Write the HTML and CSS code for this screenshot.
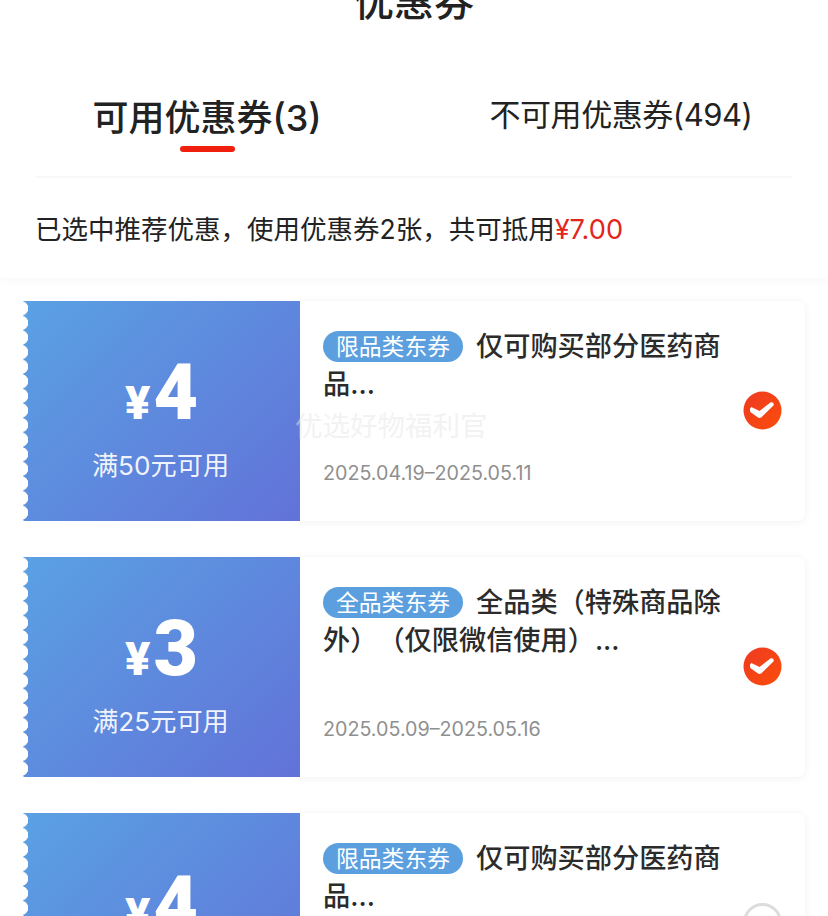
FILE: index.html
```html
<!DOCTYPE html>
<html lang="zh">
<head>
<meta charset="utf-8">
<title>优惠券</title>
<link rel="stylesheet" href="styles.css">
</head>
<body>
<div class="page">
  <header class="header">
    <h1 class="title">优惠券</h1>
    <nav class="tabs">
      <div class="tab tab-active">可用优惠券(3)<span class="tab-bar"></span></div>
      <div class="tab">不可用优惠券(494)</div>
    </nav>
    <div class="divider"></div>
    <div class="summary">已选中推荐优惠，使用优惠券2张，共可抵用<span class="summary-amount">¥7.00</span></div>
  </header>
  <main class="list">
    <article class="coupon">
      <div class="coupon-value">
        <div class="price"><span class="currency">¥</span><span class="amount">4</span></div>
        <div class="condition">满50元可用</div>
      </div>
      <div class="coupon-body">
        <div class="coupon-info">
          <div class="coupon-title"><span class="tag">限品类东券</span>仅可购买部分医药商品...</div>
          <div class="coupon-date">2025.04.19–2025.05.11</div>
        </div>
        <svg class="check" viewBox="0 0 40 40"><defs><linearGradient id="g1" x1="0" y1="0" x2="1" y2="1"><stop offset="0" stop-color="#ee3a22"/><stop offset="1" stop-color="#fb4d0c"/></linearGradient></defs><circle cx="20" cy="20" r="19.5" fill="url(#g1)"/><path d="M8.5 16.5L17 20.5L28.5 11.5Q32 11 31.5 14.5L19 27Q17 28.5 15 27L7.5 21.5Q6.5 17.5 8.5 16.5Z" fill="#fff"/></svg>
      </div>
    </article>
    <article class="coupon">
      <div class="coupon-value">
        <div class="price"><span class="currency">¥</span><span class="amount">3</span></div>
        <div class="condition">满25元可用</div>
      </div>
      <div class="coupon-body">
        <div class="coupon-info">
          <div class="coupon-title"><span class="tag">全品类东券</span>全品类（特殊商品除外）（仅限微信使用）...</div>
          <div class="coupon-date">2025.05.09–2025.05.16</div>
        </div>
        <svg class="check" viewBox="0 0 40 40"><circle cx="20" cy="20" r="19.5" fill="url(#g1)"/><path d="M8.5 16.5L17 20.5L28.5 11.5Q32 11 31.5 14.5L19 27Q17 28.5 15 27L7.5 21.5Q6.5 17.5 8.5 16.5Z" fill="#fff"/></svg>
      </div>
    </article>
    <article class="coupon">
      <div class="coupon-value">
        <div class="price"><span class="currency">¥</span><span class="amount">4</span></div>
        <div class="condition">满50元可用</div>
      </div>
      <div class="coupon-body">
        <div class="coupon-info">
          <div class="coupon-title"><span class="tag">限品类东券</span>仅可购买部分医药商品...</div>
          <div class="coupon-date">2025.04.19–2025.05.11</div>
        </div>
        <span class="check check-off"></span>
      </div>
    </article>
  </main>
  <div class="watermark">优选好物福利官</div>
</div>
</body>
</html>
```

FILE: styles.css
```css
* { box-sizing: border-box; }
html, body { margin: 0; padding: 0; background: #fff; }
body {
  font-family: Inter, "Noto Sans CJK SC", sans-serif;
  color: #222;
}
.page { position: relative; height: 916px; overflow: hidden; background: #fff; }

.header {
  height: 278px;
  background: #fff;
  box-shadow: 0 2px 10px rgba(0, 0, 0, 0.035);
  display: flex;
  flex-direction: column;
}
.title {
  margin: -18px 0 0;
  height: 40px;
  line-height: 40px;
  font-size: 40px;
  font-weight: 500;
  text-align: center;
  color: #222;
}
.tabs {
  height: 154px;
  padding-top: 67px;
  display: flex;
}
.tab {
  position: relative;
  flex: 0 0 414px;
  height: 52px;
  line-height: 52px;
  font-size: 31px;
  letter-spacing: -0.45px;
  text-align: center;
  white-space: nowrap;
  color: #222;
}
.tab-active {
  padding-top: 3px;
  font-size: 36px;
  letter-spacing: 0;
  font-weight: 500;
}
.tab-bar {
  position: absolute;
  left: 180px;
  top: 57px;
  width: 55px;
  height: 6px;
  border-radius: 3px;
  background: #f0200f;
}
.divider {
  flex: none;
  margin: 0 36px;
  height: 2px;
  background: #f8f8f8;
}
.summary {
  margin: 34px 0 0 35px;
  height: 34px;
  line-height: 34px;
  font-size: 26.5px;
  white-space: nowrap;
  color: #222;
}
.summary-amount { color: #e3261d; font-size: 27.2px; }

.list {
  padding: 23px 23px 0;
  display: flex;
  flex-direction: column;
  gap: 36px;
}
.coupon {
  flex: none;
  display: flex;
  height: 220px;
  width: 782px;
}
.coupon-value {
  position: relative;
  flex: none;
  width: 277px;
  background: linear-gradient(135deg, #5aa1e3 0%, #6272d8 100%);
  display: flex;
  flex-direction: column;
  align-items: center;
  color: #fff;
}
.coupon-value::before {
  content: "";
  position: absolute;
  left: 0;
  top: 0;
  bottom: 0;
  width: 6px;
  background: radial-gradient(circle at -2px 50%, #fff 7px, transparent 7.5px) 0 0 / 6px 14.6px repeat-y;
}
.price {
  margin-top: 54px;
  height: 76px;
  display: flex;
  align-items: baseline;
  justify-content: center;
  line-height: 76px;
}
.currency {
  font-family: Roboto, sans-serif;
  font-size: 47px;
  font-weight: 900;
  margin-right: 3px;
}
.amount {
  font-family: Roboto, sans-serif;
  font-size: 77px;
  font-weight: 900;
}
.condition {
  margin-top: 18px;
  padding-right: 2px;
  line-height: 34px;
  font-size: 26.2px;
  color: rgba(255, 255, 255, 0.92);
  white-space: nowrap;
}
.coupon-body {
  flex: 1;
  min-width: 0;
  background: #fff;
  border-radius: 0 8px 8px 0;
  box-shadow: 0 1px 8px rgba(0, 0, 0, 0.06);
  padding: 0 23px;
  display: flex;
  align-items: center;
  gap: 22px;
}
.coupon-info {
  flex: 1;
  min-width: 0;
  height: 220px;
  padding-top: 27px;
  display: flex;
  flex-direction: column;
}
.coupon-title {
  height: 76px;
  line-height: 38px;
  font-size: 27.2px;
  font-weight: 500;
  color: #2b2b2b;
  width: 400px;
  text-spacing-trim: space-all;
}
.tag {
  display: inline-block;
  vertical-align: top;
  margin: 3px 13px 0 0;
  width: 140px;
  height: 31px;
  line-height: 32px;
  border-radius: 16px;
  background: #5b9fdf;
  color: #fff;
  font-size: 22.8px;
  font-weight: 400;
  text-align: center;
}
.coupon-date {
  margin-top: 55px;
  line-height: 28px;
  font-size: 19.7px;
  color: #8f8f8f;
  white-space: nowrap;
}
.check {
  flex: none;
  display: block;
  width: 39px;
  height: 39px;
  margin-top: -2px;
}
.check-off {
  border: 3px solid #dcdcdc;
  border-radius: 50%;
  background: #fff;
}
.watermark {
  position: absolute;
  left: 295px;
  top: 408px;
  line-height: 36px;
  font-size: 27.5px;
  color: rgba(230, 230, 230, 0.5);
  white-space: nowrap;
}
```
